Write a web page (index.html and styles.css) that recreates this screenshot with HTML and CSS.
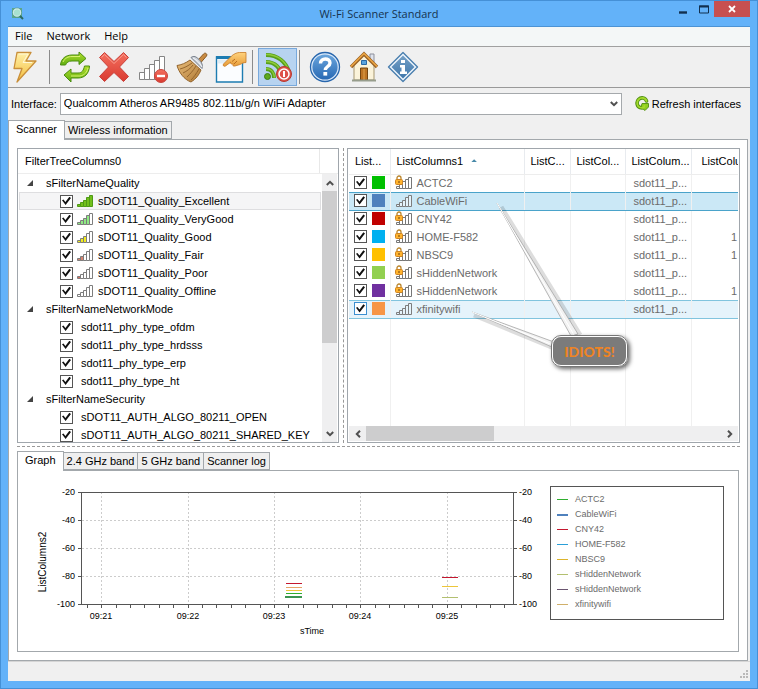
FILE: index.html
```html
<!DOCTYPE html>
<html lang="en">
<head>
<meta charset="utf-8">
<title>Wi-Fi Scanner Standard</title>
<link rel="stylesheet" href="styles.css">
</head>
<body>
<svg class="defs" aria-hidden="true">
  <defs>
    <linearGradient id="gold" x1="0" y1="0" x2="0" y2="1"><stop offset="0" stop-color="#fff0a8"/><stop offset="1" stop-color="#f3bd3c"/></linearGradient>
    <linearGradient id="green" x1="0" y1="0" x2="0" y2="1"><stop offset="0" stop-color="#b5e02c"/><stop offset="1" stop-color="#5fae12"/></linearGradient>
    <linearGradient id="red" x1="0" y1="0" x2="0" y2="1"><stop offset="0" stop-color="#f4705f"/><stop offset="1" stop-color="#d93a30"/></linearGradient>
    <linearGradient id="blue" x1="0" y1="0" x2="0" y2="1"><stop offset="0" stop-color="#6aa5dc"/><stop offset="1" stop-color="#2869b4"/></linearGradient>
    <linearGradient id="steel" x1="0" y1="0" x2="0" y2="1"><stop offset="0" stop-color="#75a0c6"/><stop offset="1" stop-color="#3f77ab"/></linearGradient>
    <linearGradient id="straw" x1="0" y1="0" x2="1" y2="1"><stop offset="0" stop-color="#e9bd7b"/><stop offset="1" stop-color="#b07a35"/></linearGradient>
    <linearGradient id="skin" x1="0" y1="0" x2="0" y2="1"><stop offset="0" stop-color="#ffd27d"/><stop offset="1" stop-color="#e79c38"/></linearGradient>
  </defs>
  <symbol id="bars" viewBox="0 0 16 12">
    <g stroke="var(--line)" stroke-width="1">
      <path class="b1" d="M.5 9.5h3v2h-3z"/><path class="b2" d="M3.500 7.500h3v4h-3z"/><path class="b3" d="M6.500 5.500h3v6h-3z"/><path class="b4" d="M9.500 2.500h3v9h-3z"/><path class="b5" d="M12.500.5h3v11h-3z"/>
    </g>
  </symbol>
  <symbol id="locked" viewBox="0 0 17 14">
    <g stroke="#777" fill="#fff"><path d="M1.500 11.500h3v2h-3zM4.500 9.500h3v4h-3zM7.500 6.500h3v7h-3zM10.500 4.500h3v9h-3zM13.500 2.500h3v11h-3z"/></g>
    <path d="M2 5V3a2 2 0 0 1 4 0v2" fill="none" stroke="#b9852c" stroke-width="1.300"/>
    <rect x=".5" y="4.500" width="7" height="5" rx="1" fill="#ffb32e" stroke="#cf8320"/><path d="M4 6v2" stroke="#6b4310"/>
  </symbol>
</svg>

<div class="window">
  <header class="titlebar">
    <svg class="appicon" viewBox="0 0 14 14"><rect x="1" y="1" width="10" height="10" fill="#5aa78b"/><circle cx="6" cy="5.500" r="4" fill="#a8e0d0" stroke="#e0f4ee" stroke-width="1.300"/><circle cx="6" cy="5.500" r="4.600" fill="none" stroke="#2f7f73" stroke-width=".6"/><path d="M9 9l3 3" stroke="#2b6b62" stroke-width="2"/></svg>
    <h1>Wi-Fi Scanner Standard</h1>
    <div class="winbtns">
      <button class="min" aria-label="Minimize"><svg viewBox="0 0 8 9"><path d="M0 7.500h8" stroke="#12304f" stroke-width="2.400"/></svg></button>
      <button class="max" aria-label="Maximize"><svg viewBox="0 0 10 9"><path d="M.5 1h9v7h-9z" fill="none" stroke="#12304f"/><path d="M0 1.500h10" stroke="#12304f" stroke-width="2"/></svg></button>
      <button class="close" aria-label="Close"><svg viewBox="0 0 8 8"><path d="M1 1l6 6M7 1L1 7" stroke="#fff" stroke-width="1.800"/></svg></button>
    </div>
  </header>

  <div class="client">
    <nav class="menu"><button>File</button><button>Network</button><button>Help</button></nav>

    <div class="toolbar" role="toolbar">
      <button aria-label="Connect"><svg viewBox="0 0 32 32"><path d="M6 1.500h14l-5 8.500h10L6 31l5-13.500H3z" fill="url(#gold)" stroke="#c98f3a" stroke-width="1.300" stroke-linejoin="round"/><path d="M7.500 3h9.500l-5 8.500h9" fill="none" stroke="#fff8d6" stroke-width="1"/></svg></button>
      <span class="sep"></span>
      <button aria-label="Rescan"><svg viewBox="0 0 32 32"><g fill="url(#green)" stroke="#4a8c10" stroke-width="1" stroke-linejoin="round"><path d="M1.500 14C2 7.500 7 4 13 4h7V1l7 6.500-7 6V10h-7c-4 0-5 1.500-6.500 4z"/><path d="M30.500 15c-.5 8-5 12-11.500 12h-7v4l-7-7 7-6v4h7c4 0 5.500-2.500 6.500-7z"/></g><path d="M4 11c2-4 5-5.500 9-5.500h8M29 17c-1 4-3 7-8 8h-9" stroke="#d8f272" fill="none"/></svg></button>
      <button aria-label="Stop"><svg viewBox="0 0 32 32"><path d="M1.500 6.500l5-5L16 10.500l9.500-9 5 5L21.500 16l9 9.500-5 5L16 21.500l-9.500 9-5-5 9-9.500z" fill="url(#red)" stroke="#c9403a" stroke-linejoin="round"/><path d="M3.500 6.500l3-3L16 12.500l9.500-9 3 3" fill="none" stroke="#f99b8c"/></svg></button>
      <button aria-label="Remove network"><svg viewBox="0 0 32 32"><path d="M2.500 21.500h5v7h-5zM7.500 17.500h5v11h-5zM12.500 13.500h5v15h-5zM17.500 9.500h5v19h-5zM22.500 5.500h5v23h-5z" fill="#fff" stroke="#858585"/><circle cx="24" cy="25" r="6.500" fill="url(#red)" stroke="#c7463e"/><path d="M20 25h8" stroke="#fff" stroke-width="2.400"/></svg></button>
      <button aria-label="Clear"><svg viewBox="0 0 32 32"><path d="M22 9l5.500-6c1.500-2 4.500 0 3 2l-6 7z" fill="#c98b43" stroke="#8a5a24"/><path d="M14 9C10 12 5 14 1 14.500c2 7 7 14 14 16.500 5-3 8-7 10-12z" fill="url(#straw)" stroke="#94652d" stroke-linejoin="round"/><path d="M16 12C12 15 8 17 4 18M17 14c-3 4-6 6-10 8M20 15c-3 5-6 8-9 11M23 18c-3 5-5 8-8 11" stroke="#8f6029" fill="none" stroke-width=".9"/><path d="M15 6.500c3-2 5-1 8 2s4 6 3 9z" fill="#ccd1d8" stroke="#777f8b"/><path d="M17 7c4 2 7 5 9 9" stroke="#f5f7fa" fill="none"/></svg></button>
      <button aria-label="Properties"><svg viewBox="0 0 32 32"><path d="M1.500 6h26v25h-26z" fill="#fbfdff" stroke="#1d7cb1" stroke-width="1.400"/><path d="M1 6.500h27" stroke="#1d7cb1" stroke-width="3"/><path d="M3 8.500h23v4H3z" fill="#e0edf6"/><path d="M31 1.500v10c-3 0-4 1-6 2l-5 1.500c-2 .5-3-1-1.500-2-3 .5-3.500-1-2.500-2L10.500 15c-1.500 1-3-.5-2-2l8-8c3-2.500 6-3.500 8-3.500z" fill="url(#skin)" stroke="#c67a26" stroke-width=".8" stroke-linejoin="round"/><path d="M17 10.500l3-2.500M19 13l3-3" stroke="#b96c20"/></svg></button>
      <span class="sep"></span>
      <button class="pressed" aria-label="Auto scan" aria-pressed="true"><svg viewBox="0 0 32 32"><g fill="none" stroke="#579f1b" stroke-width="4"><path d="M4 18c5 0 8 4 8 9"/><path d="M4 11c9 0 15 6 15 14"/><path d="M4 4c12 0 20 7 23 17"/></g><g fill="none" stroke="#8fcb3a" stroke-width="1.500"><path d="M4 17.500c5 0 8 4 8.500 9"/><path d="M4 10.500c9 0 15 6 15.500 14"/><path d="M4 3.500c12 0 20 7 23 17"/></g><circle cx="5.500" cy="25.500" r="3" fill="#5da91c" stroke="#3b7c12"/><circle cx="22" cy="23" r="7.500" fill="#dd5148" stroke="#b73932"/><circle cx="22" cy="23" r="5" fill="none" stroke="#fff" stroke-width="1.500"/><path d="M22 20v6" stroke="#fff" stroke-width="2"/></svg></button>
      <span class="sep"></span>
      <button aria-label="Help"><svg viewBox="0 0 32 32"><circle cx="16" cy="16" r="14.500" fill="#dceafa" stroke="#2766ad" stroke-width="1.300"/><circle cx="16" cy="16" r="12.600" fill="url(#blue)"/><path d="M11.500 12.500c0-6 9.500-6 9.500-.5 0 3.500-4.700 3.500-4.700 7" fill="none" stroke="#fff" stroke-width="3.400"/><rect x="14.400" y="21" width="3.800" height="3.600" fill="#fff"/></svg></button>
      <button aria-label="Home page"><svg viewBox="0 0 32 32"><path d="M22 3h4v8h-4z" fill="#dfe3ec" stroke="#8c8f9b"/><path d="M6 14L16 4l10 10v15H6z" fill="#fbf3da" stroke="#a79771"/><path d="M3 16L16 3l13 13" fill="none" stroke="#9b6326" stroke-width="3.400"/><path d="M3 15.500L16 2.500l13 13" fill="none" stroke="#eda743" stroke-width="1.500"/><path d="M13.500 9.500h5v4h-5z" fill="#5aa4de" stroke="#2a69a4"/><path d="M12.500 17h7v12h-7z" fill="#bd7422" stroke="#754610"/><path d="M16 18v11" stroke="#e1a34b"/><path d="M4 29.500h24" stroke="#979d8c" stroke-width="2"/></svg></button>
      <button aria-label="About"><svg viewBox="0 0 32 32"><path d="M16 1.500L30.500 16 16 30.500 1.500 16z" fill="#eef5fc" stroke="#4b7fae" stroke-width="1.400" stroke-linejoin="round"/><path d="M16 4.500L27.500 16 16 27.500 4.500 16z" fill="url(#steel)"/><path d="M14 9h4v3h-4zM13 14h5v6.500h2V23h-7v-2.500h1.500v-4H13z" fill="#fff"/></svg></button>
    </div>

    <div class="iface">
      <label for="adapter">Interface:</label>
      <span class="combo">
        <select id="adapter"><option>Qualcomm Atheros AR9485 802.11b/g/n WiFi Adapter</option></select>
        <svg viewBox="0 0 8 6"><path d="M.8 1L4 4.200 7.200 1" fill="none" stroke="#505050" stroke-width="2"/></svg>
      </span>
      <button class="refresh"><svg viewBox="0 0 14 15"><g fill="none" stroke-linecap="round"><path d="M11.500 5C10.500 1.500 6 1 3.500 3.500S2 10.500 5 11.500s4.500-.2 4.500-1.500" stroke="#4f8f10" stroke-width="3.600"/></g><path d="M7 7.500h6.500V11L10 14.500 6 11z" fill="#8fcf20" stroke="#4f8f10" stroke-width=".9" stroke-linejoin="round"/><path d="M11.500 5C10.500 1.500 6 1 3.500 3.500S2 10.500 5 11.500s4.500-.2 4.500-1.500" fill="none" stroke="#a4da2c" stroke-width="1.800" stroke-linecap="round"/></svg>Refresh interfaces</button>
    </div>

    <div class="tabs" role="tablist"><button class="tab active" role="tab">Scanner</button><button class="tab" role="tab">Wireless information</button></div>

    <main class="page">
      <div class="split">
        <section class="tree">
          <div class="tree-head"><span>FilterTreeColumns0</span></div>
          <div class="tree-body">
            <ul class="nodes">
              <li class="group"><i class="twisty"></i>sFilterNameQuality</li>
              <li class="hot"><label><input type="checkbox" checked><svg class="q q5"><use href="#bars"/></svg>sDOT11_Quality_Excellent</label></li>
              <li><label><input type="checkbox" checked><svg class="q q4"><use href="#bars"/></svg>sDOT11_Quality_VeryGood</label></li>
              <li><label><input type="checkbox" checked><svg class="q q3"><use href="#bars"/></svg>sDOT11_Quality_Good</label></li>
              <li><label><input type="checkbox" checked><svg class="q q2"><use href="#bars"/></svg>sDOT11_Quality_Fair</label></li>
              <li><label><input type="checkbox" checked><svg class="q q1"><use href="#bars"/></svg>sDOT11_Quality_Poor</label></li>
              <li><label><input type="checkbox" checked><svg class="q"><use href="#bars"/></svg>sDOT11_Quality_Offline</label></li>
              <li class="group"><i class="twisty"></i>sFilterNameNetworkMode</li>
              <li><label><input type="checkbox" checked>sdot11_phy_type_ofdm</label></li>
              <li><label><input type="checkbox" checked>sdot11_phy_type_hrdsss</label></li>
              <li><label><input type="checkbox" checked>sdot11_phy_type_erp</label></li>
              <li><label><input type="checkbox" checked>sdot11_phy_type_ht</label></li>
              <li class="group"><i class="twisty"></i>sFilterNameSecurity</li>
              <li><label><input type="checkbox" checked>sDOT11_AUTH_ALGO_80211_OPEN</label></li>
              <li><label><input type="checkbox" checked>sDOT11_AUTH_ALGO_80211_SHARED_KEY</label></li>
            </ul>
            <div class="vscroll">
              <button aria-label="Scroll up"><svg viewBox="0 0 8 6"><path d="M.8 5L4 1.800 7.200 5" fill="none" stroke="#505050" stroke-width="2"/></svg></button>
              <div class="track"><div class="thumb"></div></div>
              <button aria-label="Scroll down"><svg viewBox="0 0 8 6"><path d="M.8 1L4 4.200 7.200 1" fill="none" stroke="#505050" stroke-width="2"/></svg></button>
            </div>
          </div>
        </section>

        <div class="vsplit"></div>

        <section class="list">
          <div class="list-body">
            <table>
              <colgroup><col class="c0"><col class="c1"><col class="c2"><col class="c3"><col class="c4"><col></colgroup>
              <thead><tr><th>List...</th><th>ListColumns1<i class="sort"></i></th><th>ListC...</th><th>ListCol...</th><th>ListColum...</th><th class="last">ListColu</th></tr></thead>
              <tbody>
                <tr><td><input type="checkbox" checked aria-label="ACTC2"><i class="sw s1"></i></td><td><svg class="net"><use href="#locked"/></svg>ACTC2</td><td></td><td></td><td>sdot11_p...</td><td></td></tr>
                <tr class="selected"><td><input type="checkbox" checked aria-label="CableWiFi"><i class="sw s2"></i></td><td><svg class="net open"><use href="#bars"/></svg>CableWiFi</td><td></td><td></td><td>sdot11_p...</td><td></td></tr>
                <tr><td><input type="checkbox" checked aria-label="CNY42"><i class="sw s3"></i></td><td><svg class="net"><use href="#locked"/></svg>CNY42</td><td></td><td></td><td>sdot11_p...</td><td></td></tr>
                <tr><td><input type="checkbox" checked aria-label="HOME-F582"><i class="sw s4"></i></td><td><svg class="net"><use href="#locked"/></svg>HOME-F582</td><td></td><td></td><td>sdot11_p...</td><td>1</td></tr>
                <tr><td><input type="checkbox" checked aria-label="NBSC9"><i class="sw s5"></i></td><td><svg class="net"><use href="#locked"/></svg>NBSC9</td><td></td><td></td><td>sdot11_p...</td><td>1</td></tr>
                <tr><td><input type="checkbox" checked aria-label="sHiddenNetwork"><i class="sw s6"></i></td><td><svg class="net"><use href="#locked"/></svg>sHiddenNetwork</td><td></td><td></td><td>sdot11_p...</td><td></td></tr>
                <tr><td><input type="checkbox" checked aria-label="sHiddenNetwork"><i class="sw s7"></i></td><td><svg class="net"><use href="#locked"/></svg>sHiddenNetwork</td><td></td><td></td><td>sdot11_p...</td><td>1</td></tr>
                <tr class="hover"><td><input type="checkbox" checked aria-label="xfinitywifi"><i class="sw s8"></i></td><td><svg class="net open"><use href="#bars"/></svg>xfinitywifi</td><td></td><td></td><td>sdot11_p...</td><td></td></tr>
                <tr class="rest"><td></td><td></td><td></td><td></td><td></td><td></td></tr>
              </tbody>
            </table>
          </div>
          <div class="hscroll">
            <button aria-label="Scroll left"><svg viewBox="0 0 6 8"><path d="M5 .8L1.800 4 5 7.200" fill="none" stroke="#505050" stroke-width="2"/></svg></button>
            <div class="track"><div class="thumb"></div></div>
            <button aria-label="Scroll right"><svg viewBox="0 0 6 8"><path d="M1 .8L4.200 4 1 7.200" fill="none" stroke="#505050" stroke-width="2"/></svg></button>
          </div>
          <svg class="pointers" viewBox="0 0 290 230">
            <g stroke="#0002" stroke-width="5"><path d="M153 58L232 186M126 166l80 33"/></g>
            <path d="M149 54l74 133 7-2zM124 163l80 35 2-5z" fill="#f2f2f2" stroke="#a5a5a5" stroke-width=".8"/>
            <path d="M149 54l77 132M124 163l81 33" stroke="#fff" stroke-width="1"/>
          </svg>
          <div class="callout">IDIOTS!</div>
        </section>
      </div>

      <div class="hsplit"></div>

      <div class="tabs" role="tablist"><button class="tab active" role="tab">Graph</button><button class="tab" role="tab">2.4 GHz band</button><button class="tab" role="tab">5 GHz band</button><button class="tab" role="tab">Scanner log</button></div>
      <section class="graph">
        <svg class="chart" viewBox="18 471 527 180">
          <g stroke="#ccc" stroke-dasharray="2 2" fill="none"><path d="M82 520.500h431M82 548.500h431M82 576.500h431M101.500 492v112M188.500 492v112M274.500 492v112M360.500 492v112M447.500 492v112"/></g>
          <path d="M78 492.500h439M78 604.500h439M81.500 492v113M513.500 492v113M78 520.500h4M78 548.500h4M78 576.500h4M513 520.500h4M513 548.500h4M513 576.500h4" stroke="#555" fill="none"/>
          <path d="M87.500 605v3M101.500 605v3M116.500 605v3M130.500 605v3M144.500 605v3M159.500 605v3M173.500 605v3M188.500 605v3M202.500 605v3M216.500 605v3M231.500 605v3M245.500 605v3M260.500 605v3M274.500 605v3M288.500 605v3M303.500 605v3M317.500 605v3M332.500 605v3M346.500 605v3M360.500 605v3M375.500 605v3M389.500 605v3M404.500 605v3M418.500 605v3M432.500 605v3M447.500 605v3M461.500 605v3M476.500 605v3M490.500 605v3M504.500 605v3" stroke="#555"/>
          <g fill="none"><path d="M286 583.500h16M442 577.500h16" stroke="#c4182f"/><path d="M286 587.500h16" stroke="#e8a468"/><path d="M286 590.500h16M442 586.500h16" stroke="#edc63a"/><path d="M286 593.500h16" stroke="#2fae2f"/><path d="M285 597h17" stroke="#3c9550" stroke-width="2"/><path d="M442 597.500h16" stroke="#b3c070"/></g>
          <g class="end"><text x="75" y="495">-20</text><text x="75" y="523">-40</text><text x="75" y="551">-60</text><text x="75" y="579">-80</text><text x="75" y="607">-100</text></g>
          <g><text x="519" y="495">-20</text><text x="519" y="523">-40</text><text x="519" y="551">-60</text><text x="519" y="579">-80</text><text x="519" y="607">-100</text></g>
          <g class="mid"><text x="101" y="619">09:21</text><text x="188" y="619">09:22</text><text x="274" y="619">09:23</text><text x="360" y="619">09:24</text><text x="447" y="619">09:25</text><text x="312" y="634">sTime</text>
          <text class="ytitle" transform="translate(46 562) rotate(-90)">ListColumns2</text></g>
        </svg>
        <ul class="legend">
          <li><i class="k1"></i>ACTC2</li><li><i class="k2"></i>CableWiFi</li><li><i class="k3"></i>CNY42</li><li><i class="k4"></i>HOME-F582</li><li><i class="k5"></i>NBSC9</li><li><i class="k6"></i>sHiddenNetwork</li><li><i class="k7"></i>sHiddenNetwork</li><li><i class="k8"></i>xfinitywifi</li>
        </ul>
      </section>
    </main>

    <footer class="status"><svg viewBox="0 0 9 9"><path d="M6 0h2v2H6zM3 3h2v2H3zM6 3h2v2H6zM0 6h2v2H0zM3 6h2v2H3zM6 6h2v2H6z" fill="#b9b9b9"/></svg></footer>
  </div>
</div>
</body>
</html>
```
FILE: styles.css
```css
* { box-sizing: border-box; }
body { margin: 0; font: 11px/18px "Liberation Sans", Arial, sans-serif; color: #000; }
button { margin: 0; padding: 0; border: 0; background: none; font: inherit; color: inherit; }
ul { list-style: none; margin: 0; padding: 0; }
svg { display: block; flex: none; --line: #7d7d7d; }
.defs { position: absolute; width: 0; height: 0; }

.window { display: flex; flex-direction: column; height: 100vh; min-height: 560px; padding: 0 7px 7px; background: #63b2f9; border: 1px solid #4590d6; }
.titlebar { flex: none; display: grid; grid-template-columns: 1fr auto 1fr; height: 25px; }
.appicon { width: 14px; height: 14px; margin: 6px 0 0 3px; }
.titlebar h1 { margin: 4px 0 0; font: 11px/18px "Open Sans", sans-serif; color: #16324e; }
.winbtns { display: flex; justify-content: flex-end; align-items: flex-start; }
.winbtns button { display: flex; align-items: center; justify-content: center; height: 16px; width: 21px; }
.winbtns .close { width: 36px; background: #c75050; }
.winbtns .min svg { width: 8px; height: 9px; }
.winbtns .max svg { width: 10px; height: 9px; }
.winbtns .close svg { width: 8px; height: 8px; }

.client { flex: 1; min-height: 0; display: flex; flex-direction: column; background: #f0f0f0; border-top: 1px solid #4c93d4; }
.menu { flex: none; display: flex; height: 20px; padding-left: 7px; gap: 14px; background: #f4f7f7; border-bottom: 1px solid #a0a0a0; font: 500 11px/17px "Open Sans", sans-serif; }
.menu button { height: 17px; }
.toolbar { flex: none; display: flex; align-items: center; height: 41px; border-bottom: 1px solid #999; }
.toolbar button { display: flex; align-items: center; justify-content: center; width: 39px; height: 38px; }
.toolbar button:first-child { justify-content: flex-start; padding-left: 3px; }
.toolbar svg { width: 32px; height: 32px; }
.toolbar .pressed { background: #b7d3f0; border: 1px solid #78a9dc; }
.sep { width: 1px; height: 34px; margin: 0 5px 0 2px; background: #8b8b8b; }

.iface { flex: none; display: flex; align-items: center; height: 31px; padding: 0 9px 0 3px; }
.combo { position: relative; flex: 1; margin-left: 3px; }
.combo select { display: block; width: 100%; height: 22px; padding: 0 3px 2px; appearance: none; background: #fff; border: 1px solid #a5a9ac; border-radius: 0; font: inherit; color: #000; }
.combo svg { position: absolute; right: 4px; top: 8px; width: 8px; height: 6px; }
.refresh { display: flex; align-items: center; gap: 3px; margin-left: 13px; }
.refresh svg { width: 14px; height: 15px; }

.tabs { flex: none; display: flex; align-items: flex-end; height: 21px; margin-bottom: -1px; }
.tab { height: 18px; margin-left: -1px; padding: 0 3px; border: 1px solid #a3a8ac; background: #efefef; line-height: 17px; margin-bottom: 1px; }
.tab.active { height: 20px; margin: 0; padding: 0 7px 2px; background: #fff; border-bottom: 0; z-index: 1; }

.page { flex: 1; min-height: 0; display: flex; flex-direction: column; margin-right: 2px; padding: 8px 7px 8px 8px; background: #fff; border: 1px solid #a3a8ac; }
.split { flex: 1; min-height: 0; display: flex; }
.vsplit { width: 1px; margin: 0 3px 0 4px; border-left: 1px dashed #999; }
.hsplit { flex: none; height: 7px; padding-top: 3px; }
.hsplit::before { content: ""; display: block; border-top: 1px dashed #999; }

.tree { flex: none; width: 45%; max-width: 322px; display: flex; flex-direction: column; border: 1px solid #a0a6ac; }
.tree-head { flex: none; height: 25px; padding: 0 18px 0 7px; border-bottom: 1px solid #ededed; line-height: 24px; }
.tree-head span { display: block; border-right: 1px solid #e8e8e8; }
.tree-body { flex: 1; min-height: 0; display: flex; padding-right: 1px; }
.nodes { flex: 1; overflow: hidden; white-space: nowrap; }
.nodes li { display: flex; height: 18px; padding-left: 41px; margin-left: 1px; }
.nodes .group { padding-left: 8px; }
.nodes .hot { background: #f5f5f6; box-shadow: inset 0 0 0 1px #dedee0; margin-right: 1px; }
.nodes label { display: flex; align-items: center; gap: 8px; }
.nodes .q { width: 16px; height: 12px; margin: 0 -3px 0 -4px; }
.twisty { width: 6px; height: 6px; margin: 6px 13px 0 0; background: #444; clip-path: polygon(100% 0, 100% 100%, 0 100%); }

input[type="checkbox"] { appearance: none; flex: none; width: 13px; height: 13px; margin: 0; border: 1px solid #555; background: #fff; }
input[type="checkbox"]:checked::before { content: ""; display: block; width: 9px; height: 9px; margin: 1px; background: #111; clip-path: polygon(0 42%, 16% 32%, 38% 60%, 82% 4%, 100% 18%, 40% 94%); }

.b1 { fill: var(--f1, #fff); } .b2 { fill: var(--f2, #fff); } .b3 { fill: var(--f3, #fff); } .b4 { fill: var(--f4, #fff); } .b5 { fill: var(--f5, #fff); }
.q5 { --line: #4f9a16; --f1: #72c01c; --f2: #72c01c; --f3: #72c01c; --f4: #72c01c; --f5: #72c01c; }
.q4 { --f1: #8eea83; --f2: #8eea83; --f3: #8eea83; --f4: #8eea83; }
.q3 { --f1: #f3ee1e; --f2: #f3ee1e; --f3: #f3ee1e; }
.q2 { --f1: #d88572; --f2: #d88572; }
.q1 { --f1: #d86a5a; }

.vscroll { display: flex; flex-direction: column; width: 15px; background: #efeff0; }
.vscroll button { display: flex; align-items: center; justify-content: center; height: 17px; }
.vscroll svg { width: 8px; height: 6px; }
.track { flex: 1; }
.vscroll .thumb { height: 65%; background: #cdcdce; }

.list { position: relative; flex: 1; min-width: 0; display: flex; flex-direction: column; padding: 0 1px 1px; border: 1px solid #a0a6ac; }
.list-body { flex: 1; min-height: 0; display: flex; overflow: hidden; }
table { width: 100%; table-layout: fixed; border-collapse: collapse; color: #6b6b6b; }
.c0 { width: 41px; } .c1 { width: 134px; } .c2 { width: 46px; } .c3 { width: 55px; } .c4 { width: 66px; }
th { height: 25px; padding: 0 0 0 6px; border-bottom: 1px solid #ededed; border-right: 1px solid #e8ebef; color: #000; font-weight: 400; text-align: left; white-space: nowrap; overflow: hidden; }
th.last { padding-left: 10px; }
td { height: 18px; padding: 0 0 0 8px; border-right: 1px solid #f0f0f0; line-height: 16px; white-space: nowrap; overflow: hidden; }
td:first-child { padding-left: 5px; }
td:nth-child(2) { padding-left: 4px; }
td:last-child { padding: 0 1px 0 0; text-align: right; }
th:last-child, td:last-child { border-right: 0; }
td input, .sw, .net { display: inline-block; vertical-align: text-bottom; }
.sw { width: 13px; height: 13px; margin-left: 5px; }
.net { width: 17px; height: 14px; margin-right: 5px; }
.net.open { width: 16px; height: 12px; margin-left: 1px; }
.sort { display: inline-block; width: 6px; height: 3px; margin: 0 0 3px 8px; background: #4889a8; clip-path: polygon(50% 0, 100% 100%, 0 100%); }
.selected { background: #cbe8f6; }
.selected td { border-top: 1px solid #4aa3ca; border-bottom: 1px solid #4aa3ca; }
.hover { background: #e5f3fb; }
.hover td { border-top: 1px solid #81c4de; border-bottom: 1px solid #81c4de; }
.selected .net, .hover .net { --f1: #e5f3fb; --f2: #e5f3fb; --f3: #e5f3fb; --f4: #e5f3fb; --f5: #e5f3fb; }
.hover input[type="checkbox"] { border-color: #3c8fd0; }
.rest td { height: auto; }
.s1 { background: #00c000; } .s2 { background: #4f81bd; } .s3 { background: #c00000; } .s4 { background: #00b0f0; }
.s5 { background: #ffc000; } .s6 { background: #92d050; } .s7 { background: #7030a0; } .s8 { background: #f79646; }

.hscroll { flex: none; display: flex; height: 15px; background: #efeff0; }
.hscroll button { display: flex; align-items: center; justify-content: center; width: 17px; }
.hscroll svg { width: 6px; height: 8px; }
.hscroll .thumb { width: 36%; height: 15px; background: #cdcdce; }
.pointers { position: absolute; left: 0; top: 0; width: 290px; height: 230px; fill: none; }
.callout { position: absolute; left: 203px; top: 186px; width: 77px; height: 32px; border: 2px solid #fff; border-radius: 10px; outline: 1px solid #777; outline-offset: -1px; background: #7b7b7b; box-shadow: 2px 2px 4px #0009; color: #ee8424; font: 900 14px/29px Lato, sans-serif; text-align: center; }

.graph { flex: none; display: flex; border: 1px solid #a3a8ac; padding-right: 14px; margin-right: 1px; }
.chart { flex: 0 1 527px; min-width: 0; height: 180px; font-size: 9px; }
.end { text-anchor: end; }
.mid { text-anchor: middle; }
.ytitle { font-size: 10px; }
.legend { flex: 1; align-self: flex-start; margin: 15px 0 0 5px; padding: 5px 6px 7px; border: 1px solid #555; color: #6b6b6b; font-size: 9px; line-height: 15px; }
.legend li { display: flex; align-items: center; gap: 7px; }
.legend i { width: 11px; height: 1px; background: #2fae2f; }
.legend .k2 { height: 2px; background: #4f81bd; } .legend .k3 { background: #c4182f; } .legend .k4 { background: #2b9fd8; } .legend .k5 { background: #dcb42c; }
.legend .k6 { background: #b3c070; } .legend .k7 { background: #6a5570; } .legend .k8 { background: #d0b06a; }

.status { flex: none; display: flex; justify-content: flex-end; align-items: flex-end; height: 20px; padding: 0 1px 2px; border-top: 1px solid #d5d5d5; }
.status svg { width: 9px; height: 9px; }
```
